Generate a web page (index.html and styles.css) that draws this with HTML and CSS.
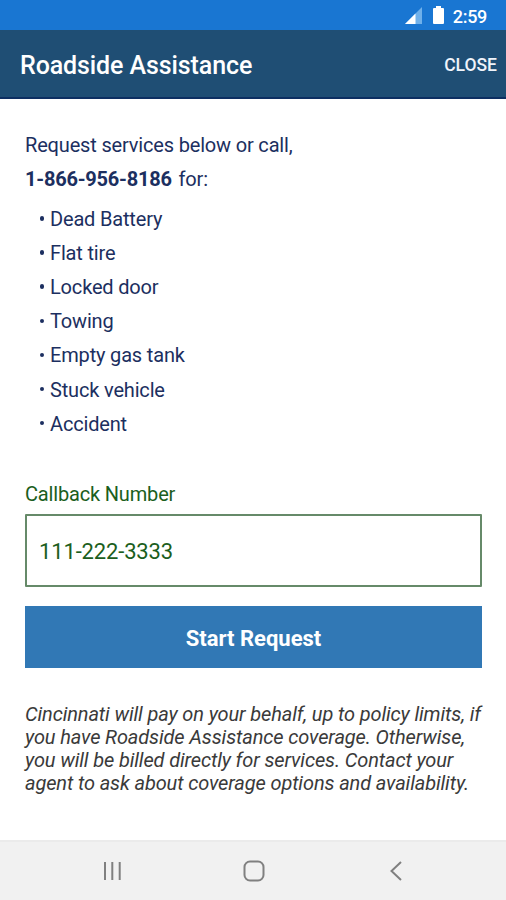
FILE: index.html
```
<!DOCTYPE html>
<html lang="en">
<head>
  <meta charset="UTF-8" />
  <meta name="viewport" content="width=device-width, initial-scale=1.0"/>
  <title>Roadside Assistance</title>
  <link rel="stylesheet" href="styles.css">
</head>
<body>
  <div class="status-bar">
    <svg class="signal" width="17" height="17" viewBox="0 0 17 17">
      <path d="M17 0V17H0Z" fill="#6fb0ea"/>
      <path d="M10.500 6.500V17H0Z" fill="#fff"/>
    </svg>
    <svg class="battery" width="11" height="18" viewBox="0 0 11 18">
      <path d="M3 0H8V2H10Q11 2 11 3V17Q11 18 10 18H1Q0 18 0 17V3Q0 2 1 2H3Z" fill="#fff"/>
    </svg>
    <span class="time">2:59</span>
  </div>

  <header class="header">
    <h1>Roadside Assistance</h1>
    <button type="button" class="close-btn">CLOSE</button>
  </header>

  <main class="content">
    <p class="intro">Request services below or call,<br><b>1-866-956-8186</b> for:</p>
    <ul class="services">
      <li>Dead Battery</li>
      <li>Flat tire</li>
      <li>Locked door</li>
      <li>Towing</li>
      <li>Empty gas tank</li>
      <li>Stuck vehicle</li>
      <li>Accident</li>
    </ul>

    <label for="callback">Callback Number</label>
    <input type="tel" id="callback" class="callback" value="111-222-3333" />

    <button type="button" class="start-btn">Start Request</button>

    <p class="note">Cincinnati will pay on your behalf, up to policy limits, if<br>you have Roadside Assistance coverage. Otherwise,<br>you will be billed directly for services. Contact your<br>agent to ask about coverage options and availability.</p>
  </main>

  <nav class="nav-bar">
    <svg width="22" height="22" viewBox="0 0 22 22">
      <path d="M4 2V20M11.300 2V20M18.700 2V20"/>
    </svg>
    <svg width="22" height="22" viewBox="0 0 22 22">
      <rect x="1.500" y="1.500" width="19" height="19" rx="5.500"/>
    </svg>
    <svg width="22" height="22" viewBox="0 0 22 22">
      <path d="M16 2L6.500 11L16 20"/>
    </svg>
  </nav>
</body>
</html>
```
FILE: styles.css
```
* {
    box-sizing: border-box;
}
body {
    font-family: Roboto, "Liberation Sans", sans-serif;
    background-color: #fff;
    margin: 0;
    height: 900px;
    display: flex;
    flex-direction: column;
    overflow: hidden;
}
button {
    font-family: inherit;
    border: none;
    cursor: pointer;
}
.status-bar {
    height: 30px;
    padding: 0 19px 0 0;
    background-color: #1976d2;
    color: #fff;
    display: flex;
    justify-content: flex-end;
    align-items: center;
}
.battery {
    margin: 0 9px 0 11px;
}
.time {
    padding-top: 2px;
    font-size: 18px;
    font-weight: 500;
    letter-spacing: -0.3px;
}
.header {
    height: 69px;
    padding: 0 9px 0 20px;
    background-color: #1f4e74;
    border-bottom: 2px solid #0d2f62;
    color: #fff;
    display: flex;
    justify-content: space-between;
    align-items: center;
}
h1 {
    margin: 0;
    padding-top: 4px;
    font-size: 25px;
    font-weight: 500;
    letter-spacing: -0.1px;
}
.close-btn {
    padding: 2px 0 0;
    background: none;
    color: #f0f4fb;
    font-size: 17.5px;
    font-weight: 500;
}
.content {
    flex: 1;
    padding: 29px 24px 0 25px;
    color: #1c2f60;
    font-size: 20px;
    letter-spacing: -0.17px;
}
.intro {
    margin: 0;
    line-height: 34px;
}
.intro b {
    margin-right: 2px;
    letter-spacing: -0.22px;
}
.services {
    list-style: none;
    margin: 6px 0 0;
    padding: 0 0 0 13px;
}
.services li {
    display: flex;
    align-items: center;
    height: 34.1px;
}
.services li::before {
    content: "";
    width: 4.5px;
    height: 4.5px;
    margin: 0 6px 1px 1.5px;
    border-radius: 50%;
    background-color: #1c2f60;
}
label {
    display: block;
    margin-top: 38.3px;
    color: #1b5e20;
    line-height: 30px;
}
.callback {
    display: block;
    width: 100%;
    height: 73px;
    margin-top: 5px;
    padding: 2px 12px 0;
    border: 2px solid #668a69;
    border-radius: 1px;
    background-color: #fff;
    color: #1b5e20;
    font-family: inherit;
    font-size: 22px;
    letter-spacing: -0.15px;
}
.start-btn {
    display: block;
    width: 100%;
    height: 62px;
    margin-top: 19px;
    padding: 4px 0 0;
    background-color: #3178b5;
    color: #fff;
    font-size: 22px;
    font-weight: 700;
}
.note {
    margin: 35px 0 0;
    color: #3a3a3a;
    font-size: 20px;
    font-style: italic;
    letter-spacing: -0.13px;
    line-height: 23px;
    white-space: nowrap;
}
.nav-bar {
    height: 60px;
    padding: 0 99px 0 101px;
    background-color: #f1f1f1;
    border-top: 2px solid #ebebeb;
    display: flex;
    justify-content: space-between;
    align-items: center;
}
.nav-bar svg {
    fill: none;
    stroke: #808080;
    stroke-width: 2;
}
```
